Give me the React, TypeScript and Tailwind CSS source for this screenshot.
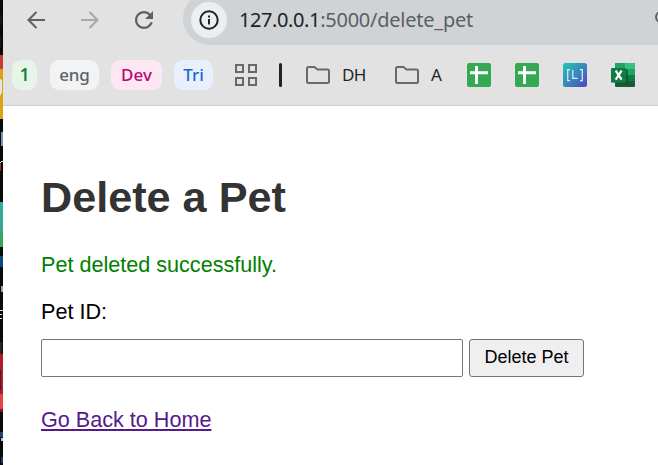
import React from "react";

const uiFont = "font-['Noto_Sans','Open_Sans',sans-serif]";

function Chip({ label, className }: { label: string; className: string }) {
  return (
    <div className={`flex h-[30px] shrink-0 items-center justify-center rounded-[9px] pb-[2px] text-[17px] leading-none ${className}`}>
      {label}
    </div>
  );
}

function Folder() {
  return (
    <svg className="h-6 w-[26px] shrink-0" viewBox="0 0 26 24" fill="none" stroke="#686868" strokeWidth="2">
      <path d="M3.5 4H9.5L12.5 6.5H22.5Q24 6.5 24 8V18.5Q24 20 22.5 20H3.5Q2 20 2 18.5V5.5Q2 4 3.5 4Z" />
    </svg>
  );
}

function Sheet() {
  return (
    <svg className="h-6 w-6 shrink-0" viewBox="0 0 24 24">
      <rect width="24" height="24" rx="2.2" fill="#34a853" />
      <path d="M9.5 3V21M3 9.8H21" stroke="#fff" strokeWidth="2.9" />
    </svg>
  );
}

function Brackets() {
  return (
    <svg className="h-6 w-6 shrink-0" viewBox="0 0 24 24">
      <defs>
        <linearGradient id="teal" x1="0" y1="0" x2="1" y2="1">
          <stop stopColor="#20c9b1" />
          <stop offset=".55" stopColor="#3b83bb" />
          <stop offset="1" stopColor="#5141c5" />
        </linearGradient>
      </defs>
      <rect width="24" height="24" rx="2.5" fill="url(#teal)" />
      <path d="M7 6.5H4.7V17.5H7M17 6.5H19.3V17.5H17M9.8 7V15.3H14.8" fill="none" stroke="#d9edf5" strokeWidth="1.25" />
    </svg>
  );
}

function Excel() {
  return (
    <svg className="h-6 w-6 shrink-0" viewBox="0 0 24 24">
      <rect x="4" width="20" height="24" rx="1.3" fill="#185c37" />
      <path d="M5.3 0H14V6H4V1.3Q4 0 5.3 0Z" fill="#21a366" />
      <path d="M14 0H22.7Q24 0 24 1.3V6H14Z" fill="#33c481" />
      <path d="M4 6H14V12H4Z" fill="#107c41" />
      <path d="M14 6H24V12H14Z" fill="#21a366" />
      <path d="M14 12H24V18H14Z" fill="#107c41" />
      <path d="M5 6H15Q17 6 17 8V18Q17 20.5 14.5 20.5H5Z" fill="#0b4528" opacity=".65" />
      <rect y="5" width="15.3" height="14.8" rx="1.3" fill="#107c41" />
      <path d="M4.7 7.7L10.6 16.6M10.6 7.7L4.7 16.6" stroke="#fff" strokeWidth="2.2" />
    </svg>
  );
}

function DesktopEdge() {
  return (
    <svg className="h-[465px] w-[3px] shrink-0" viewBox="0 0 3 465" shapeRendering="crispEdges">
      <rect width="3" height="465" fill="#090b09" />
      <path d="M0 15H2V25H0ZM0 36H1V48H0Z" fill="#171909" />
      <rect y="55" width="3" height="14" fill="#cc3a31" />
      <rect y="69" width="3" height="50" fill="#d9a514" />
      <path d="M0 78L2 81V92L0 96Z" fill="#e5e5df" />
      <rect x="1" y="132" width="2" height="14" fill="#7395ba" />
      <path d="M0 162H1V163H0ZM1 161H3V162H1Z" fill="#eee5cc" />
      <rect y="163" width="1" height="8" fill="#ab211d" />
      <rect y="202" width="3" height="17" fill="#32ab9f" />
      <rect y="219" width="3" height="14" fill="#36a98a" />
      <rect y="233" width="3" height="14" fill="#36a45f" />
      <rect y="256" width="3" height="11" fill="#104680" />
      <rect x="1" y="286" width="2" height="6" fill="#87a8bd" />
      <path d="M0 310H3V311H0ZM0 314H2V315H0ZM0 318H2V319H0Z" fill="#ddd" />
      <rect y="342" width="2" height="12" fill="#28291a" />
      <rect y="354" width="3" height="40" fill="#b5192b" />
      <rect y="370" width="1" height="20" fill="#302a25" />
      <rect y="394" width="3" height="15" fill="#e34345" />
      <rect y="409" width="3" height="3" fill="#8d101c" />
      <rect y="432" width="3" height="5" fill="#24466c" />
      <rect x="1" y="438" width="2" height="3" fill="#c1c3bc" />
      <rect x="1" y="457" width="2" height="6" fill="#173b61" />
    </svg>
  );
}

export default function App() {
  return (
    <div className="flex h-[465px] w-[658px] overflow-hidden bg-white">
      <DesktopEdge />
      <div className="flex min-w-0 flex-1 flex-col">
        <header className={`h-[106px] shrink-0 border-b border-[#cecece] bg-[#e2e2e2] ${uiFont}`}>
          <div className="flex h-[45px] overflow-hidden">
            <svg className="h-[45px] w-[180px] shrink-0" viewBox="3 0 180 45" fill="none" strokeWidth="2.1">
              <path d="M45 20H29M36.5 12L28.5 20L36.5 28" stroke="#606060" />
              <path d="M81 20H97M89.5 12L97.5 20L89.5 28" stroke="#a9a9a9" />
              <path
                transform="translate(130.5 6.5) scale(1.125)"
                d="M17.65 6.35C16.2 4.9 14.21 4 12 4c-4.42 0-7.99 3.58-7.99 8s3.57 8 7.99 8c3.73 0 6.84-2.55 7.73-6h-2.08c-.82 2.33-3.04 4-5.65 4-3.31 0-6-2.69-6-6s2.69-6 6-6c1.66 0 3.14.69 4.22 1.78L13 11h7V4l-2.35 2.35z"
                fill="#606060"
              />
            </svg>
            <div className="-mt-2 flex h-[53px] flex-1 items-center rounded-l-[27px] bg-[#cfd3d6] pl-2">
              <div className="mt-[2px] flex size-9 shrink-0 items-center justify-center rounded-full bg-[#ebeff2]">
                <svg className="size-5" viewBox="0 0 20 20" fill="none" stroke="#202124" strokeWidth="2">
                  <circle cx="10" cy="10" r="8.7" />
                  <path d="M10 9V14.5M10 5.4V7.4" />
                </svg>
              </div>
              <div className="ml-3 mt-[1px] whitespace-nowrap text-[20px] leading-[27px] tracking-[-0.24px] text-[#5b5f63]">
                <span className="tracking-[-0.4px] text-[#202124]">127.0.0.1</span>:5000/delete_pet
              </div>
              <div className="-mr-[9px] -mt-[3px] ml-auto size-3 rounded-full border-2 border-[#606060]" />
            </div>
          </div>
          <div className="flex h-[60px] items-center pl-[9px]">
            <Chip label="1" className="w-[25px] bg-[#e6f4ea] font-semibold text-[#188038]" />
            <Chip label="eng" className="ml-[13px] w-[49px] bg-[#f1f3f4] font-medium tracking-[-0.2px] text-[#5f6368]" />
            <Chip label="Dev" className="ml-3 w-[51px] bg-[#fde7f3] font-medium text-[#b80672]" />
            <Chip label="Tri" className="ml-3 w-[39px] bg-[#e8f0fe] font-medium text-[#1967d2]" />
            <svg className="ml-[22px] size-[22px] shrink-0" viewBox="0 0 22 22" fill="none" stroke="#686868" strokeWidth="2">
              <path d="M1 1H8V8H1ZM14 1H21V8H14ZM1 14H8V21H1ZM14 14H21V21H14Z" />
            </svg>
            <div className="ml-[22px] h-6 w-[3px] shrink-0 rounded-full bg-[#1d2328]" />
            <div className="ml-[23px]"><Folder /></div>
            <span className="ml-[11px] w-[27px] pb-px text-[17px] tracking-[-0.7px] text-[#252525]">DH</span>
            <div className="ml-[25px]"><Folder /></div>
            <span className="ml-[11px] w-3 pb-px text-[17px] text-[#252525]">A</span>
            <div className="ml-6 flex gap-6"><Sheet /><Sheet /><Brackets /><Excel /></div>
          </div>
        </header>
        <main className="flex flex-col items-start pl-[38px] pt-[66px] font-['Liberation_Sans',Arial,sans-serif] text-[21.6px] leading-[25px] text-black">
          <h1 className="text-[43.2px] font-bold leading-[50px] text-[#333]">Delete a Pet</h1>
          <p className="mt-[30px] text-[#008000]">Pet deleted successfully.</p>
          <label htmlFor="pet-id" className="mt-[22px]">Pet ID:</label>
          <div className="mt-[15px] flex gap-[6px]">
            <input id="pet-id" className="h-[38px] w-[422px] rounded-[2px] border border-[#767676] bg-white px-2 outline-none" />
            <button className="h-[38px] w-[115px] rounded-[3px] border border-[#767676] bg-[#efefef] pb-[2px] text-[18px] leading-5">Delete Pet</button>
          </div>
          <a href="#" className="mt-[30px] text-[#551a8b] underline decoration-2 underline-offset-2">Go Back to Home</a>
        </main>
      </div>
    </div>
  );
}
